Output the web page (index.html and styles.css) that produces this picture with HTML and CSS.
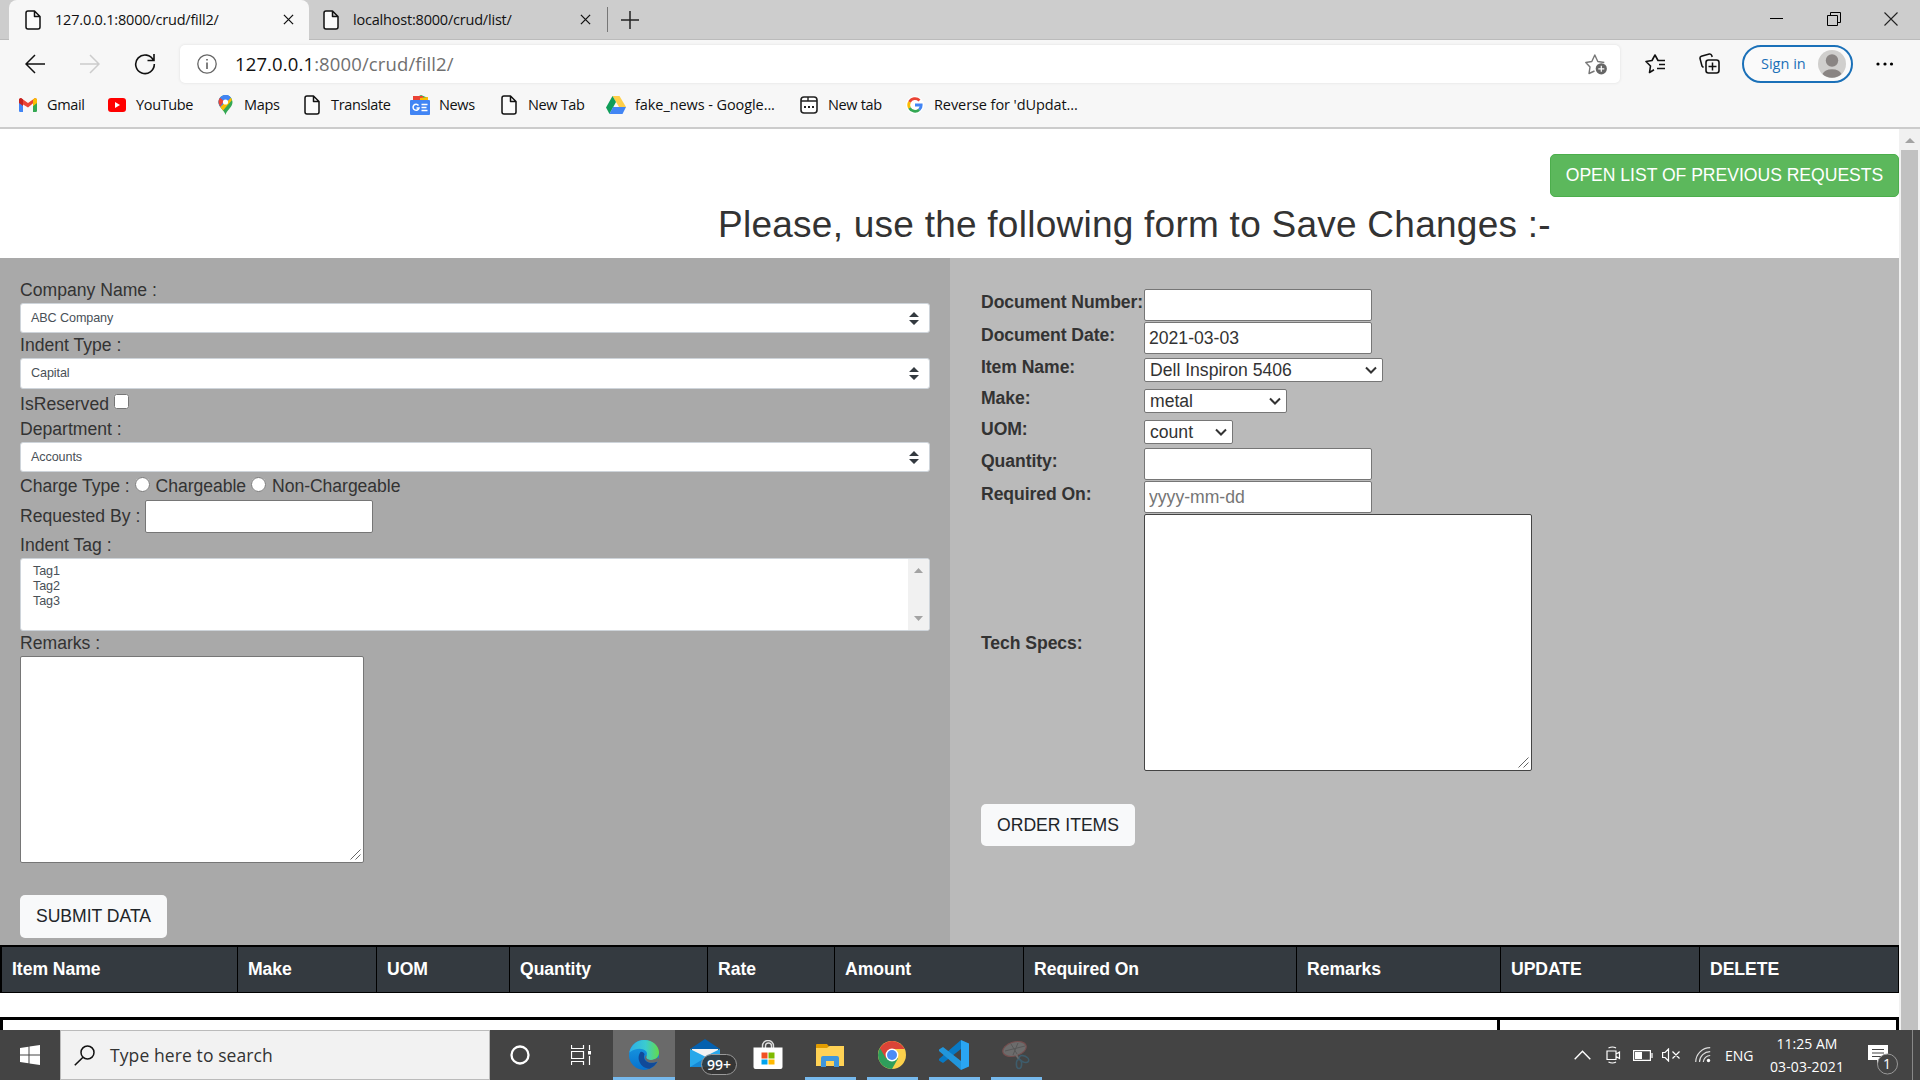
FILE: index.html
```html
<!DOCTYPE html>
<html lang="en">
<head>
<meta charset="utf-8">
<title>127.0.0.1:8000/crud/fill2/</title>
<link rel="stylesheet" href="styles.css">
</head>
<body>
<svg class="defs" width="0" height="0">
  <symbol id="page" viewBox="0 0 16 20"><path d="M1 3a2 2 0 0 1 2-2h6.500l5.500 5.500V17a2 2 0 0 1-2 2H3a2 2 0 0 1-2-2zM9.500 1v5.500H15" fill="#fbfbfb" stroke="#111" stroke-width="1.500" stroke-linejoin="round"/></symbol>
  <symbol id="cross" viewBox="0 0 12 12"><path d="M1 1l10 10M11 1L1 11" stroke="#111" stroke-width="1.400" fill="none"/></symbol>
</svg>

<header class="tabstrip">
  <div class="tab active"><svg class="pg"><use href="#page"/></svg><span class="tab-title">127.0.0.1:8000/crud/fill2/</span><svg class="x"><use href="#cross"/></svg></div>
  <div class="tab second"><svg class="pg"><use href="#page"/></svg><span class="tab-title t2">localhost:8000/crud/list/</span><svg class="x"><use href="#cross"/></svg></div>
  <svg class="plus" width="18" height="18" viewBox="0 0 18 18"><path d="M9 0v18M0 9h18" stroke="#222" stroke-width="1.500"/></svg>
  <div class="winbtns">
    <svg width="14" height="14"><path d="M0 6.500h13" stroke="#000"/></svg>
    <svg width="14" height="14"><path d="M.5 3.500h10v10H.5zM3.500 3V.5h10v10H11" fill="none" stroke="#000"/></svg>
    <svg width="14" height="14"><path d="M.5.5l13 13M13.500.5l-13 13" stroke="#222" stroke-width="1.100"/></svg>
  </div>
</header>

<nav class="toolbar">
  <svg class="back" width="20" height="20" viewBox="0 0 20 20"><path d="M10 1L1 10l9 9M1 10h19" fill="none" stroke="#111" stroke-width="1.500"/></svg>
  <svg class="fwd" width="20" height="20" viewBox="0 0 20 20"><path d="M10 1l9 9-9 9M19 10H0" fill="none" stroke="#ccc" stroke-width="1.500"/></svg>
  <svg class="reload" width="22" height="22" viewBox="0 0 22 22"><path d="M19.500 7.500A9.300 9.300 0 1 0 20.300 11M20 1v6.500h-6.500" fill="none" stroke="#111" stroke-width="1.600"/></svg>
  <div class="address">
    <svg width="20" height="20" viewBox="0 0 20 20"><circle cx="10" cy="10" r="9.200" fill="none" stroke="#666" stroke-width="1.300"/><path d="M10 8.500V15M10 5v1.600" stroke="#555" stroke-width="1.500"/></svg>
    <span class="url"><b>127.0.0.1</b>:8000/crud/fill2/</span>
    <svg class="addstar" width="23" height="22" viewBox="0 0 23 22"><path d="M9.500 18L4 20.500l1-6.500-4.200-4.500 6-1 3-6.500 3 6.500 6.500 1" fill="none" stroke="#777" stroke-width="1.400" stroke-linejoin="round"/><circle cx="16.300" cy="15.800" r="5.600" fill="#666"/><path d="M16.300 12.800v6M13.300 15.800h6" stroke="#fff" stroke-width="1.200"/></svg>
  </div>
  <svg class="favs" width="22" height="20" viewBox="0 0 22 20"><path d="M9 15.800L4.500 18.500l1-6.500L1 7.500l6-1L10 1l3 5.500h7M14 10.500h6M12 14.500h8" fill="none" stroke="#111" stroke-width="1.600" stroke-linejoin="round"/></svg>
  <svg class="coll" width="21" height="21" viewBox="0 0 21 21"><path d="M4.500 14.500L3 13 1 5.500a2 2 0 0 1 1.300-2.200l8-2.200a2 2 0 0 1 2.400 1.500l.5 1.400" fill="none" stroke="#111" stroke-width="1.500"/><rect x="7" y="7" width="13" height="13" rx="2.500" fill="none" stroke="#111" stroke-width="1.600"/><path d="M13.500 9.500v8M9.500 13.500h8" stroke="#111" stroke-width="1.500"/></svg>
  <div class="signin"><span>Sign in</span><svg width="28" height="28" viewBox="0 0 28 28"><circle cx="14" cy="14" r="14" fill="#d0cfcd"/><circle cx="14" cy="10.500" r="6.200" fill="#8a8583"/><path d="M4.500 24a10 7 0 0 1 19 0A14 14 0 0 1 4.500 24z" fill="#8a8583"/></svg></div>
  <svg class="dots" width="18" height="4"><circle cx="2" cy="2" r="1.600"/><circle cx="9" cy="2" r="1.600"/><circle cx="15.500" cy="2" r="1.600"/></svg>
</nav>

<nav class="bookmarks">
  <div><i><svg width="18" height="14" viewBox="0 0 18 14"><path d="M0 2v10.500A1.300 1.300 0 0 0 1.300 14H4V6z" fill="#4285f4"/><path d="M18 2v10.500a1.300 1.300 0 0 1-1.300 1.500H14V6z" fill="#34a853"/><path d="M14 1l4 1v2.500L14 8z" fill="#fbbc04"/><path d="M0 2C0 0 2 0 3 .7L9 5l6-4.300C16.500-.4 18 .4 18 2L9 9.500 0 4z" fill="#ea4335"/><path d="M0 2.500A1.800 1.800 0 0 1 3 .7L4 1.500V8L0 5z" fill="#c5221f"/><path d="M18 2.500A1.800 1.800 0 0 0 15 .7l-1 .8V8l4-3z" fill="#fbbc04"/></svg></i><span>Gmail</span></div>
  <div><i><svg width="18" height="14"><rect width="18" height="14" rx="3" fill="#f00"/><path d="M7 4l5 3-5 3z" fill="#fff"/></svg></i><span>YouTube</span></div>
  <div><i><svg width="15" height="20" viewBox="0 0 15 20"><path d="M7.500 20C6.500 15 .5 12.500.5 7a7 7 0 0 1 14 0c0 5.500-6 8-7 13z" fill="#34a853"/><path d="M.5 7c0 2 .8 3.700 2 5.200L12.800 2.500A7 7 0 0 0 .5 7z" fill="#4285f4"/><path d="M.5 7A7 7 0 0 1 2 2.700L6 6l-3.800 5.500A9 9 0 0 1 .5 7z" fill="#ea4335"/><path d="M14 5L5 15.500 2.300 12 12.500 2.500z" fill="#fbbc04"/><path d="M5 .5a7 7 0 0 1 7.800 2L9 7 4 4z" fill="#4285f4"/><circle cx="7.500" cy="7" r="2.600" fill="#fff"/></svg></i><span>Maps</span></div>
  <div><i><svg class="pg"><use href="#page"/></svg></i><span>Translate</span></div>
  <div><i><svg width="20" height="20"><path d="M3 4l8-4 7 3v4H3z" fill="#34a853"/><path d="M3 1h10v5H3z" fill="#ea4335"/><path d="M10 3l8-1v5h-8z" fill="#fbbc04"/><rect y="5" width="20" height="15" rx="1" fill="#4285f4"/><path d="M8.500 10.500a3 3 0 1 0 .5 2.500H6.500M11.500 9.500h6M11.500 12.500h5M11.500 15.500h6" fill="none" stroke="#fff" stroke-width="1.500"/></svg></i><span>News</span></div>
  <div><i><svg class="pg"><use href="#page"/></svg></i><span>New Tab</span></div>
  <div><i><svg width="20" height="18" viewBox="0 0 20 18"><path d="M6.500 0h7L20 11h-7z" fill="#ffcf48"/><path d="M6.500 0L10 6 3.500 18 0 11.500z" fill="#0f9d58"/><path d="M7 11h13l-3.500 7h-13z" fill="#4285f4"/></svg></i><span class="w">fake_news - Google...</span></div>
  <div><i><svg width="18" height="18"><rect x="1" y="1" width="16" height="16" rx="3" fill="#fff" stroke="#222" stroke-width="1.600"/><path d="M1 5h16M8 1v4" stroke="#222" stroke-width="1.400"/><path d="M4 11h2M8 11h2M12 11h2" stroke="#222" stroke-width="2"/></svg></i><span>New tab</span></div>
  <div><i><svg width="18" height="18" viewBox="0 0 18 18"><circle cx="9" cy="9" r="9" fill="#fff"/><g fill="none" stroke-width="2.800"><path d="M13.500 4.500A6.300 6.300 0 0 0 3.500 6" stroke="#ea4335"/><path d="M3.500 6a6.300 6.300 0 0 0 0 6" stroke="#fbbc05"/><path d="M3.500 12a6.300 6.300 0 0 0 9.700 1.800" stroke="#34a853"/><path d="M13.200 13.800A6 6 0 0 0 15.200 9H9" stroke="#4285f4"/></g></svg></i><span class="w">Reverse for 'dUpdat...</span></div>
</nav>

<div class="viewport">
  <main>
    <section class="intro">
      <a class="btn open">OPEN LIST OF PREVIOUS REQUESTS</a>
      <h1>Please, use the following form to Save Changes :-</h1>
    </section>

    <section class="panels">
      <form class="left">
        <label class="line first">Company Name :</label>
        <div class="custom">ABC Company<svg width="10" height="13"><path d="M0 5l5-5 5 5zM0 8h10l-5 5z" fill="#343a40"/></svg></div>
        <label class="line">Indent Type :</label>
        <div class="custom tall">Capital<svg width="10" height="13"><path d="M0 5l5-5 5 5zM0 8h10l-5 5z" fill="#343a40"/></svg></div>
        <div class="line reserved">IsReserved<input type="checkbox"></div>
        <label class="line dept">Department :</label>
        <div class="custom">Accounts<svg width="10" height="13"><path d="M0 5l5-5 5 5zM0 8h10l-5 5z" fill="#343a40"/></svg></div>
        <div class="line charge">Charge Type :<input type="radio" name="c"><span>Chargeable</span><input type="radio" name="c"><span>Non-Chargeable</span></div>
        <div class="line requested">Requested By :<input class="field" type="text"></div>
        <label class="line">Indent Tag :</label>
        <div class="listbox">
          <div class="tags"><div>Tag1</div><div>Tag2</div><div>Tag3</div></div>
          <div class="listbar"><svg width="9" height="5"><path d="M0 5l4.500-5L9 5z" fill="#a3a3a3"/></svg><svg width="9" height="5"><path d="M0 0h9L4.500 5z" fill="#a3a3a3"/></svg></div>
        </div>
        <label class="line">Remarks :</label>
        <textarea class="remarks"></textarea>
        <a class="btn light submit">SUBMIT DATA</a>
      </form>
      <form class="right">
        <div class="grid">
          <label>Document Number:</label><input class="field" type="text">
          <label>Document Date:</label><input class="field" type="text" value="2021-03-03">
          <label class="s">Item Name:</label><select class="item"><option>Dell Inspiron 5406</option></select>
          <label class="s">Make:</label><select class="make"><option>metal</option></select>
          <label class="s">UOM:</label><select class="uom"><option>count</option></select>
          <label>Quantity:</label><input class="field" type="text">
          <label>Required On:</label><input class="field" type="text" placeholder="yyyy-mm-dd">
          <label class="tech">Tech Specs:</label><textarea class="specs"></textarea>
        </div>
        <a class="btn light order">ORDER ITEMS</a>
      </form>
    </section>

    <div class="thead"><div>Item Name</div><div>Make</div><div>UOM</div><div>Quantity</div><div>Rate</div><div>Amount</div><div>Required On</div><div>Remarks</div><div>UPDATE</div><div>DELETE</div></div>
    <div class="totals"><div></div><div></div></div>
  </main>
  <div class="scrollbar"><svg width="10" height="5"><path d="M0 5l5-5 5 5z" fill="#a3a3a3"/></svg><div class="thumb"></div></div>
</div>

<footer class="taskbar">
  <div class="start"><svg width="20" height="20"><path d="M0 3l8.500-1.300v7.800H0zM9.500 1.500L20 0v9.500H9.500zM0 10.500h8.500v7.800L0 17zM9.500 10.500H20V20L9.500 18.500z" fill="#fff"/></svg></div>
  <div class="search"><svg width="21" height="21" viewBox="0 0 21 21"><circle cx="13.500" cy="7.500" r="6.500" fill="none" stroke="#111" stroke-width="1.500"/><path d="M9 12.200L.8 20.300" stroke="#111" stroke-width="1.600"/></svg><span>Type here to search</span></div>
  <div class="apps">
    <div><svg width="20" height="20"><circle cx="10" cy="10" r="8.500" fill="none" stroke="#fff" stroke-width="2.300"/></svg></div>
    <div><svg class="taskview" width="20" height="20"><path d="M.5 0v3.500h12V0M.5 20v-3.500h12V20M.5 6.500h12v7H.5zM18.500 0v5M18.500 11v9" fill="none" stroke="#fff" stroke-width="1.200"/><path d="M17 6h3v3.500h-3z" fill="#fff"/></svg></div>
    <div class="run on"><svg width="30" height="30" viewBox="0 0 30 30"><defs><linearGradient id="e1" x1="0" x2="1"><stop offset="0" stop-color="#2caee8"/><stop offset=".55" stop-color="#3bcbd0"/><stop offset="1" stop-color="#63dc4a"/></linearGradient><linearGradient id="e2" x1="0" x2="0" y1="0" y2="1"><stop offset="0" stop-color="#1b9de2"/><stop offset="1" stop-color="#0672cf"/></linearGradient></defs><circle cx="15" cy="15" r="15" fill="url(#e2)"/><path d="M.3 12.500C2 5 8 0 15 0c9 0 15 6 15 12.500 0 5-4 7.500-8 7.500-4.500 0-6.500-2-4.500-4.500C20 11 13 7 6 9.500 3 10.500 1 12 .3 12.500z" fill="url(#e1)"/><path d="M11.500 12C7 18 11 28 20.500 28.800A15 15 0 0 0 28 22.500c.3-.8 0-1-.8-.7C21 24.500 13 21.500 15.500 14c-1-2-3-2.500-4-2z" fill="#114a99"/><path d="M18 15.500c-2 3 1 4.500 4 4.500 2.500 0 5-1 6.500-2.500L31 20l-3 1.800c-6 2.500-12 .2-12-4.300 0-1.500 1-2 2-2z" fill="#6a6a6a"/></svg></div>
    <div><svg width="46" height="36" viewBox="0 0 46 36"><path d="M0 12L15 2l15 10z" fill="#0560ae"/><path d="M2 12h26v12H2z" fill="#f3f3f3"/><path d="M0 12l15 7.500L30 12v18H0z" fill="#28a8ea"/><path d="M0 30l15-9 15 9z" fill="#1688d4"/></svg><span class="badge">99+</span></div>
    <div><svg width="30" height="30"><path d="M9.500 9V6a5.500 5.500 0 0 1 11 0v3M12.500 8V6a3 3 0 0 1 6 0v2" fill="none" stroke="#ddd" stroke-width="1.400"/><path d="M.5 7.500h29V27a2 2 0 0 1-2 2h-25a2 2 0 0 1-2-2z" fill="#fff"/><path d="M8.500 12.500h6v6h-6z" fill="#f25022"/><path d="M15.500 12.500h6v6h-6z" fill="#7fba00"/><path d="M8.500 19.500h6v5h-6z" fill="#00a4ef"/><path d="M15.500 19.500h6v5h-6z" fill="#ffb900"/></svg></div>
    <div class="run"><svg width="28" height="24"><path d="M0 2a1 1 0 0 1 1-1h10l2.500 3L11 6H0z" fill="#e29c00"/><path d="M0 5h11l2.500-2H28v20H0z" fill="#ffd255"/><path d="M5 24V15a2 2 0 0 1 2-2h14a2 2 0 0 1 2 2v9h-5v-6h-8v6z" fill="#3f97dc"/></svg></div>
    <div class="run"><svg width="28" height="28" viewBox="0 0 28 28"><circle cx="14" cy="14" r="14" fill="#fbd04b"/><path d="M14 14L1.900 7A14 14 0 0 0 14 28l6-10.500z" fill="#2f9e5b"/><path d="M1.900 7a14 14 0 0 1 24.200 0L26.400 8H14L8 17.500z" fill="#db4437"/><circle cx="14" cy="14" r="6.400" fill="#fff"/><circle cx="14" cy="14" r="5" fill="#4c8bf5"/></svg></div>
    <div class="run"><svg width="30" height="30" viewBox="0 0 30 30"><path d="M22 0l8 3.500v23L22 30z" fill="#2aa5f2"/><path d="M22 0v9L4 23 0 20.500V19z" fill="#0879c4"/><path d="M22 30v-9L4 7 0 9.500V11z" fill="#2196dc"/></svg></div>
    <div class="run"><svg width="28" height="30" viewBox="0 0 28 30"><ellipse cx="12.500" cy="9" rx="12" ry="7" transform="rotate(-16 12.500 9)" fill="#6c6c6c" stroke="#754f4f" stroke-width="1.200"/><path d="M3 11l20-5M9 4l6 10M16 3l-5 12" stroke="#585858"/><path d="M14 15l3 4" stroke="#6c6c6c" stroke-width="2"/><ellipse cx="22" cy="19" rx="5" ry="3" transform="rotate(25 22 19)" fill="none" stroke="#3e5c6b" stroke-width="1.600"/><ellipse cx="17" cy="24" rx="2.600" ry="4.500" fill="none" stroke="#3e5c6b" stroke-width="1.600"/></svg></div>
  </div>
  <div class="tray">
    <svg class="chev" width="17" height="10"><path d="M.7 9.300l7.800-8 7.800 8" fill="none" stroke="#fff" stroke-width="1.400"/></svg>
    <svg class="cam" width="15" height="18"><path d="M1 5h9v8.500H1zM10 8l3.500-2v6.500L10 10.500M2.500 2q4-2 7.500 0M2.500 16q4 2 7.500 0" fill="none" stroke="#fff" stroke-width="1.200"/></svg>
    <svg class="bat" width="20" height="11"><path d="M.6.600h16.800v9.800H.6zM19 3v5" fill="none" stroke="#fff" stroke-width="1.200"/><path d="M2 2h7v7H2z" fill="#fff"/></svg>
    <svg class="vol" width="19" height="14"><path d="M.6 4.500h2.500L6.500 1v12L3.100 9.500H.6zM10.500 3.500l7 7M17.500 3.500l-7 7" fill="none" stroke="#fff" stroke-width="1.200"/></svg>
    <svg class="wifi" width="16" height="16"><path d="M.7 15A14.500 14.500 0 0 1 15.200.7M4.500 15A10.500 10.500 0 0 1 15.200 4.700M8.300 15a7 7 0 0 1 6.900-6.500" fill="none" stroke="#ddd" stroke-width="1.200"/><circle cx="13.500" cy="13.500" r="1.700" fill="#fff"/></svg>
    <span class="eng">ENG</span>
    <div class="clock"><span>11:25 AM</span><span class="date">03-03-2021</span></div>
    <div class="action"><svg width="32" height="32"><path d="M0 1h20v15h-7l-4 4v-4H0z" fill="#fff"/><path d="M4 5.500h12M4 9h12M4 12.500h9" stroke="#444" stroke-width="1.200"/><circle cx="19.500" cy="20" r="10" fill="#444" stroke="#999"/></svg><span>1</span></div>
  </div>
</footer>
</body>
</html>
```
FILE: styles.css
```css
* { box-sizing: border-box; }
body { margin: 0; width: 1920px; height: 1080px; overflow: hidden; display: flex; flex-direction: column; background: #fff; font-family: "Open Sans", sans-serif; color: #111; }
svg { display: block; flex: none; }
.defs { position: absolute; }
.pg { width: 16px; height: 20px; }
.x { width: 11px; height: 11px; }

.tabstrip { height: 40px; flex: none; display: flex; align-items: center; background: #cdcdcd; border-bottom: 1px solid #bbb; }
.tab { height: 40px; display: flex; align-items: center; }
.tab.active { width: 300px; margin-left: 9px; padding-left: 16px; background: #f7f7f7; border-radius: 8px 8px 0 0; }
.tab.second { width: 299px; height: 25px; padding-left: 14px; border-right: 1px solid #777; }
.tab-title { width: 227px; margin-left: 14px; font-size: 14.500px; letter-spacing: -0.2px; white-space: nowrap; }
.active .tab-title { width: 228px; }
.plus { margin-left: 13px; }
.winbtns { display: flex; gap: 43px; margin-left: auto; margin-right: 22px; margin-top: -2px; }

.toolbar { height: 47px; flex: none; display: flex; align-items: center; padding-left: 25px; background: #f7f7f7; }
.fwd { margin-left: 35px; }
.reload { margin-left: 34px; }
.address { width: 1440px; height: 38px; margin-left: 24px; padding: 0 12px 0 17px; display: flex; align-items: center; background: #fff; border-radius: 5px; box-shadow: 0 0 3px #ddd; }
.url { margin-left: 18px; font-size: 18.500px; letter-spacing: 0.12px; color: #707070; }
.url b { font-weight: 400; color: #111; }
.addstar { margin-left: auto; }
.favs { margin-left: 25px; }
.coll { margin-left: 32px; }
.signin { width: 111px; height: 38px; margin-left: 22px; padding: 0 5px 0 17px; display: flex; align-items: center; justify-content: space-between; border: 2px solid #1a70b8; border-radius: 19px; background: #fafafa; color: #1a70b8; font-size: 14.500px; }
.dots { margin-left: 23px; }

.bookmarks { height: 42px; flex: none; padding-left: 18px; display: grid; grid-template-columns: 89px 108px 87px 108px 89px 107px 193px 106px 200px; background: #f7f7f7; border-bottom: 2px solid #ccc; padding-bottom: 5px; }
.bookmarks div { display: flex; align-items: center; gap: 9px; white-space: nowrap; }
.bookmarks i { width: 20px; display: flex; justify-content: center; }
.bookmarks span { font-size: 14.500px; letter-spacing: -0.35px; }
.bookmarks .w { letter-spacing: -0.08px; }

.viewport { height: 901px; flex: none; display: flex; overflow: hidden; font-family: "Liberation Sans", Arial, sans-serif; font-size: 17.600px; color: #333; }
main { width: 1899px; }
.intro { height: 129px; display: flex; flex-direction: column; align-items: flex-end; padding-top: 25px; }
.btn { display: flex; align-items: center; justify-content: center; height: 43px; border-radius: 5px; white-space: nowrap; letter-spacing: -0.03px; }
.open { width: 349px; background: #5cb85c; border: 1px solid #4cae4c; color: #fff; }
h1 { margin: 4px 349px 0 0; width: 832px; font-weight: 400; font-size: 37px; letter-spacing: 0.25px; line-height: 48px; white-space: nowrap; }
.panels { height: 687px; display: flex; }
.left { width: 950px; padding: 19px 20px 0; background: #a9a9a9; }
.right { width: 949px; padding: 31px 31px 0; background: #bababa; }
.line { display: flex; align-items: center; height: 25px; white-space: nowrap; }
.line.first, .dept { height: 26px; }
.custom { height: 30px; padding: 0 10px; display: flex; align-items: center; justify-content: space-between; background: #fff; border: 1px solid #ced4da; border-radius: 3px; font-size: 12.600px; letter-spacing: -0.1px; color: #495057; }
.custom.tall { height: 31px; padding-bottom: 1px; }
.reserved { height: 27px; padding-top: 3px; }
.line input[type=checkbox], .line input[type=radio] { width: 15px; height: 15px; margin: 0; }
.reserved input[type=checkbox] { margin: -5px 0 0 5px; }
.charge { height: 28px; padding-top: 1px; letter-spacing: -0.05px; }
.line.charge input[type=radio] { margin: -4px 6px 0 5px; }
.requested { height: 33px; }
.field { width: 228px; height: 32px; padding: 1px 4px; border: 1px solid #767676; border-radius: 2px; font: inherit; color: #333; background: #fff; }
.requested .field { height: 33px; margin-left: 5px; }
.listbox { height: 73px; display: flex; justify-content: space-between; background: #fff; border: 1px solid #ced4da; border-radius: 3px; font-size: 12.600px; line-height: 15px; letter-spacing: -0.1px; color: #495057; overflow: hidden; }
.tags { padding: 5px 12px; }
.listbar { width: 21px; padding: 9px 6px; background: #f1f1f1; display: flex; flex-direction: column; justify-content: space-between; }
textarea { display: block; margin: 0; resize: none; border: 1px solid #767676; border-radius: 2px; background: #fff url("data:image/svg+xml,%3Csvg xmlns='http://www.w3.org/2000/svg' width='11' height='11'%3E%3Cpath d='M.5 10.500l10-10M5.500 10.500l5-5' stroke='%23555' stroke-width='.9'/%3E%3C/svg%3E") no-repeat right 2px bottom 2px; }
.remarks { width: 344px; height: 207px; }
.light { background: #f8f9fa; color: #212529; }
.submit { width: 147px; margin-top: 32px; }
.grid { display: grid; grid-template-columns: 163px 1fr; grid-template-rows: 33px 33px 31px 31px 31px 33px 33px 257px; font-weight: 400; }
.grid label { font-weight: 700; line-height: 26px; letter-spacing: -0.07px; white-space: nowrap; }
.grid .s { line-height: 24px; }
.grid .tech { align-self: center; padding-top: 1px; }
select { appearance: none; height: 24px; margin-top: 3px; padding: 0 5px; border: 1px solid #767676; border-radius: 2px; color: #333; font: inherit; background: #fff url("data:image/svg+xml,%3Csvg xmlns='http://www.w3.org/2000/svg' width='12' height='8'%3E%3Cpath d='M1 1.500l5 5 5-5' fill='none' stroke='%23333' stroke-width='2'/%3E%3C/svg%3E") no-repeat right 5px center; }
.item { width: 239px; }
.make { width: 143px; }
.uom { width: 89px; }
.specs { width: 388px; height: 257px; border-color: #444; }
.order { width: 154px; height: 42px; margin-top: 33px; }

.thead { height: 48px; display: grid; grid-template-columns: 236px 139px 133px 198px 127px 189px 273px 204px 199px 1fr; background: #343a40; border: solid #000; border-width: 2px 0 1px 2px; color: #fff; font-weight: 700; }
.thead div { padding: 10px 0 0 10px; line-height: 24px; letter-spacing: -0.05px; border-right: 1px solid #000; }
.totals { margin-top: 24px; height: 60px; display: grid; grid-template-columns: 1500px 399px; }
.totals div { border: solid #000; border-width: 3px 3px 0 0; }
.totals div:first-child { border-left-width: 3px; }
.scrollbar { width: 21px; background: #f1f1f1; display: flex; flex-direction: column; padding: 9px 2px 0; }
.scrollbar svg { margin-left: 4px; }
.thumb { flex: 1; width: 17px; margin-top: 7px; background: #c1c1c1; }

.taskbar { height: 50px; flex: none; display: flex; background: #444; color: #fff; }
.start { width: 60px; display: flex; align-items: center; justify-content: center; }
.search { width: 430px; padding-left: 13px; display: flex; align-items: center; gap: 15px; background: #f2f2f2; border: 1px solid #bbb; color: #333; font-size: 17.500px; }
.search span { letter-spacing: 0.1px; }
.apps { display: flex; margin-left: -1px; }
.apps > div { width: 62px; display: flex; align-items: center; justify-content: center; position: relative; }
.apps .run::after { content: ""; position: absolute; left: 6px; bottom: 0; width: 51px; height: 3px; background: #76b9ed; }
.apps .on { background: #6a6a6a; }
.apps .on::after { left: 0; width: 62px; }
.apps > div:nth-child(4) { justify-content: flex-start; padding-left: 15px; }
.taskview { margin-right: 3px; }
.badge { position: absolute; left: 26px; top: 24px; width: 36px; height: 21px; border: 1px solid #999; border-radius: 11px; background: rgba(50,50,50,.85); font-size: 14px; font-weight: 600; line-height: 19px; text-align: center; }
.tray { margin-left: auto; width: 346px; display: flex; align-items: center; }
.cam { margin-left: 15px; }
.bat { margin-left: 12px; }
.vol { margin-left: 9px; }
.wifi { margin-left: 14px; }
.eng { width: 30px; margin-left: 14px; font-size: 14px; }
.clock { width: 80px; margin-left: 12px; display: flex; flex-direction: column; align-items: center; font-size: 14px; line-height: 23px; white-space: nowrap; }
.date { letter-spacing: 0.1px; }
.action { position: relative; margin-left: 21px; width: 45px; border-right: 1px solid #888; height: 50px; padding-top: 14px; }
.action span { position: absolute; left: 15px; top: 24px; font-size: 14px; line-height: 20px; }
```
